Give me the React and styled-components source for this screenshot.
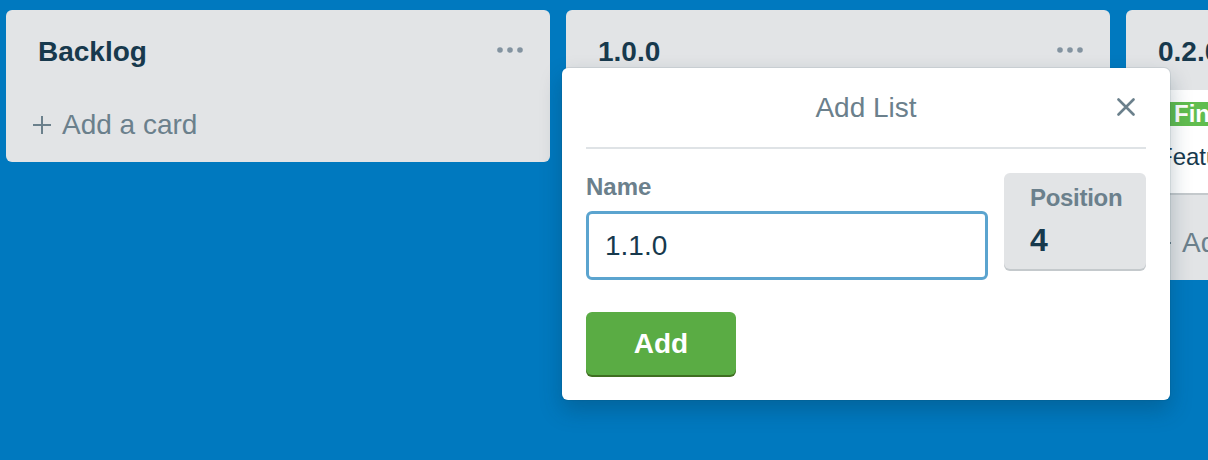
import React from "react";
import styled, { createGlobalStyle } from "styled-components";

const GlobalStyle = createGlobalStyle`
  *, *::before, *::after {
    box-sizing: border-box;
  }
  html, body {
    margin: 0;
    padding: 0;
  }
  body {
    background: #0079bf;
    font-family: "Liberation Sans", Arial, sans-serif;
    color: #17394d;
  }
`;

const Board = styled.main`
  position: relative;
  display: flex;
  align-items: flex-start;
  gap: 16px;
  width: 1208px;
  height: 460px;
  padding: 10px 0 0 6px;
  overflow: hidden;
  background: #0079bf;
`;

const List = styled.section`
  flex: 0 0 544px;
  background: #e2e4e6;
  border-radius: 6px;
  padding-bottom: 21px;
`;

const ListHeader = styled.header`
  display: flex;
  align-items: center;
  justify-content: space-between;
  padding: 26px 27px 0 32px;
`;

const ListTitle = styled.h2`
  margin: 0;
  font-size: 28px;
  line-height: 32px;
  font-weight: 700;
  color: #17394d;
`;

const MenuDots = styled.svg`
  margin-bottom: 4px;
  fill: #8393a0;
`;

const CardArea = styled.div`
  padding: 22px 16px 19px;
`;

const Card = styled.article`
  background: #fff;
  border-radius: 6px;
  box-shadow: 0 2px 0 #c4c9cc;
  padding: 12px 16px 22px;
  margin-bottom: 15px;
`;

const Label = styled.span`
  display: block;
  width: fit-content;
  min-width: 120px;
  height: 24px;
  line-height: 24px;
  padding: 0 16px;
  margin-bottom: 17px;
  border-radius: 4px;
  background: ${(p) => p.color};
  color: #fff;
  font-size: 24px;
  font-weight: 700;
  white-space: nowrap;
`;

const CardTitle = styled.p`
  margin: 0;
  font-size: 24px;
  line-height: 28px;
  color: #17394d;
  white-space: nowrap;
`;

const AddCard = styled.div`
  display: flex;
  align-items: center;
  gap: 10px;
  padding: 0 26px;
  font-size: 28px;
  line-height: 32px;
  color: #6b808c;
  white-space: nowrap;
`;

const Popover = styled.div`
  position: absolute;
  left: 562px;
  top: 68px;
  width: 608px;
  background: #fff;
  border-radius: 6px;
  padding: 0 24px 25px;
  box-shadow: 0 0 0 1px rgba(9, 45, 66, 0.08), 0 10px 22px rgba(9, 45, 66, 0.28);
`;

const PopHeader = styled.header`
  display: grid;
  grid-template-columns: 1fr auto 1fr;
  align-items: center;
  height: 81px;
  border-bottom: 2px solid #dfe3e6;
`;

const PopTitle = styled.h3`
  grid-column: 2;
  margin: 0;
  font-size: 28px;
  line-height: 32px;
  font-weight: 400;
  color: #6b808c;
`;

const CloseButton = styled.button`
  grid-column: 3;
  justify-self: end;
  display: flex;
  margin-right: 11px;
  margin-bottom: 2px;
  padding: 0;
  border: 0;
  background: none;
  cursor: pointer;
`;

const Form = styled.form`
  padding-top: 24px;
`;

const Row = styled.div`
  display: flex;
  align-items: flex-start;
  gap: 16px;
`;

const Field = styled.label`
  flex: 1;
  min-width: 0;
  display: block;
`;

const FieldLabel = styled.span`
  display: block;
  margin-bottom: 10px;
  font-size: 24px;
  line-height: 28px;
  font-weight: 700;
  color: #6b808c;
`;

const NameInput = styled.input`
  display: block;
  width: 100%;
  height: 69px;
  padding: 0 16px;
  border: 3px solid #5ba4cf;
  border-radius: 6px;
  outline: none;
  font-family: inherit;
  font-size: 28px;
  color: #17394d;
  background: #fff;
`;

const PositionBox = styled.div`
  flex: 0 0 142px;
  width: 142px;
  min-width: 0;
  height: 96px;
  padding: 11px 0 0 26px;
  background: #e2e4e6;
  border-radius: 6px;
  box-shadow: 0 2px 0 #c4c9cc;
  white-space: nowrap;
`;

const PositionLabel = styled.div`
  font-size: 24px;
  line-height: 28px;
  font-weight: 700;
  color: #6b808c;
  letter-spacing: -0.3px;
`;

const PositionValue = styled.div`
  margin-top: 10px;
  font-size: 32px;
  line-height: 36px;
  font-weight: 700;
  color: #17394d;
`;

const AddButton = styled.button`
  display: block;
  margin-top: 32px;
  width: 150px;
  height: 63px;
  border: 0;
  border-radius: 6px;
  background: #5aac44;
  box-shadow: 0 2px 0 #3f6f21;
  color: #fff;
  font-family: inherit;
  font-size: 28px;
  font-weight: 700;
  cursor: pointer;
`;

const Dots = () => (
  <MenuDots width="26" height="6" viewBox="0 0 26 6">
    <circle cx="3" cy="3" r="2.8" />
    <circle cx="13" cy="3" r="2.8" />
    <circle cx="23" cy="3" r="2.8" />
  </MenuDots>
);

const Plus = () => (
  <svg width="20" height="20" viewBox="0 0 20 20">
    <path d="M10 1v18M1 10h18" stroke="#6b808c" strokeWidth="2" />
  </svg>
);

const CloseIcon = () => (
  <svg width="18" height="18" viewBox="0 0 18 18">
    <path d="M1.5 1.5l15 15M16.5 1.5l-15 15" stroke="#6b808c" strokeWidth="2.6" strokeLinecap="round" />
  </svg>
);

const lists = [
  { id: 1, title: "Backlog", cards: [], menu: true },
  { id: 2, title: "1.0.0", cards: [], menu: true },
  {
    id: 3,
    title: "0.2.0",
    cards: [{ id: "c1", label: "Finished", labelColor: "#61bd4f", title: "Feature requests" }],
    menu: true,
  },
];

export default function App() {
  return (
    <>
      <GlobalStyle />
      <Board>
        {lists.map((list) => (
          <List key={list.id}>
            <ListHeader>
              <ListTitle>{list.title}</ListTitle>
              {list.menu && <Dots />}
            </ListHeader>
            <CardArea>
              {list.cards.map((card) => (
                <Card key={card.id}>
                  <Label color={card.labelColor}>{card.label}</Label>
                  <CardTitle>{card.title}</CardTitle>
                </Card>
              ))}
            </CardArea>
            <AddCard>
              <Plus />
              Add a card
            </AddCard>
          </List>
        ))}

        <Popover>
          <PopHeader>
            <PopTitle>Add List</PopTitle>
            <CloseButton type="button" aria-label="Close">
              <CloseIcon />
            </CloseButton>
          </PopHeader>
          <Form onSubmit={(e) => e.preventDefault()}>
            <Row>
              <Field>
                <FieldLabel>Name</FieldLabel>
                <NameInput defaultValue="1.1.0" />
              </Field>
              <PositionBox>
                <PositionLabel>Position</PositionLabel>
                <PositionValue>4</PositionValue>
              </PositionBox>
            </Row>
            <AddButton type="submit">Add</AddButton>
          </Form>
        </Popover>
      </Board>
    </>
  );
}
